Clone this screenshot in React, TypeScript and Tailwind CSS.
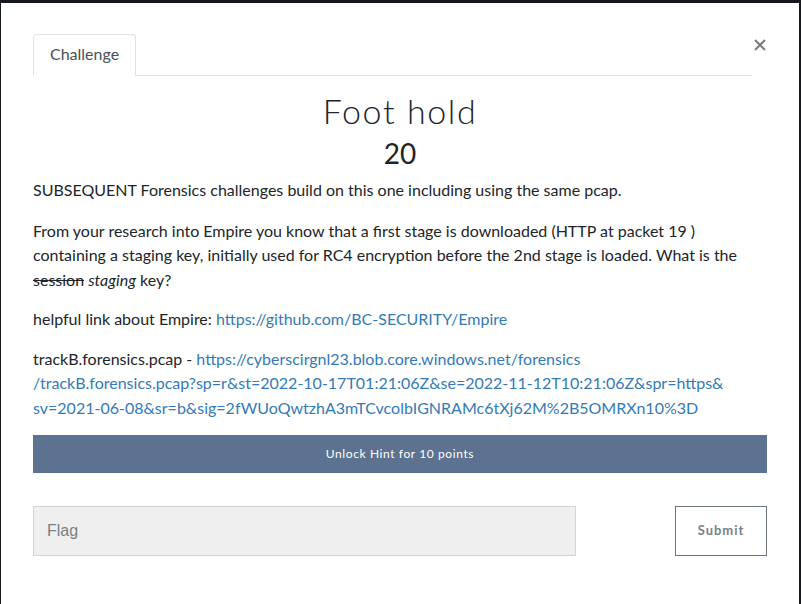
export default function App() {
  return (
    <div className="h-[604px] overflow-hidden bg-[#15181c] pl-[1px] pr-[2px] pt-[3px] font-['Lato',sans-serif] text-[#212529]">
      <div className="h-[640px] w-[798px] bg-white px-[32px]">
        {/* Tabs header */}
        <div className="flex items-end pt-[31px]">
          <div className="flex flex-1 border-b border-[#dee2e6]">
            <div className="-mb-px rounded-t-[4px] border border-[#dee2e6] border-b-white bg-white px-4 pb-[9px] pt-[7px] text-[16px] leading-6 text-[#495057]">
              Challenge
            </div>
          </div>
          <button className="mb-[24px] ml-[1px] flex h-[14px] w-[14px] items-center justify-center">
            <svg width="12" height="12" viewBox="0 0 12 12">
              <path d="M1 1 L11 11 M11 1 L1 11" stroke="#7b7b7b" strokeWidth="2" />
            </svg>
          </button>
        </div>

        {/* Title */}
        <h3 className="mt-[15px] text-center text-[34px] font-light leading-[40px] tracking-[1.6px] text-[#212529]">
          Foot hold
        </h3>
        <h4 className="mt-[5px] text-center text-[28px] leading-[34px] text-[#212529]">20</h4>

        {/* Description */}
        <div className="mt-[8px] text-[16px] leading-[24.5px]">
          <p className="mb-[16px]">SUBSEQUENT Forensics challenges build on this one including using the same pcap.</p>
          <p className="mb-[15px]">
            From your research into Empire you know that a first stage is downloaded (HTTP at packet 19 ) containing a
            staging key, initially used for RC4 encryption before the 2nd stage is loaded. What is the{" "}
            <del>session</del> <em>staging</em> key?
          </p>
          <p className="mb-[15px]">
            helpful link about Empire:{" "}
            <a className="text-[#337ab7]" href="#">
              https://github.com/BC-SECURITY/Empire
            </a>
          </p>
          <p className="mb-[15px]">
            trackB.forensics.pcap -{" "}
            <a className="text-[#337ab7]" href="#">
              https://cyberscirgnl23.blob.core.windows.net/forensics
              <br />
              /trackB.forensics.pcap?sp=r&amp;st=2022-10-17T01:21:06Z&amp;se=2022-11-12T10:21:06Z&amp;spr=https&amp;
              <br />
              sv=2021-06-08&amp;sr=b&amp;sig=2fWUoQwtzhA3mTCvcolbIGNRAMc6tXj62M%2B5OMRXn10%3D
            </a>
          </p>
        </div>

        {/* Hint */}
        <button className="flex h-[38px] w-full items-center justify-center bg-[#5c7290] text-[12px] tracking-[0.6px] text-white">
          Unlock Hint for 10 points
        </button>

        {/* Flag submit */}
        <div className="mt-[33px] flex items-start justify-between">
          <input
            className="h-[50px] w-[543px] border border-[#d3d3d3] bg-[#efefef] px-[13px] font-['Liberation_Sans',Arial,sans-serif] text-[16px] placeholder:text-[#7b7f84] outline-none"
            placeholder="Flag"
          />
          <button className="h-[50px] w-[92px] border border-[#6c757d] bg-white text-[13px] font-bold tracking-[1px] text-[#7a8087]">
            Submit
          </button>
        </div>
      </div>
    </div>
  );
}
